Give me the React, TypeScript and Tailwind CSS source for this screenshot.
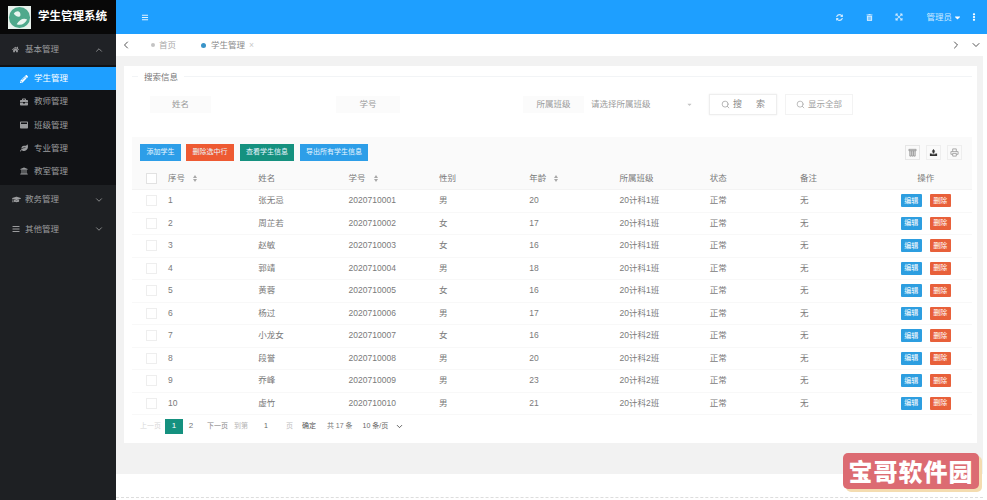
import React from "react";
import { FaHome, FaPencilAlt, FaBriefcase, FaWindowMaximize, FaLeaf, FaUniversity, FaGraduationCap, FaBars, FaSyncAlt, FaTrashAlt, FaExpandArrowsAlt, FaEllipsisV, FaCaretDown } from "react-icons/fa";
import { ChevronUp, ChevronDown, ChevronLeft, ChevronRight, Search } from "lucide-react";

const rows = [
  ["1", "张无忌", "2020710001", "男", "20", "20计科1班"],
  ["2", "周芷若", "2020710002", "女", "17", "20计科1班"],
  ["3", "赵敏", "2020710003", "女", "16", "20计科1班"],
  ["4", "郭靖", "2020710004", "男", "18", "20计科1班"],
  ["5", "黄蓉", "2020710005", "女", "16", "20计科1班"],
  ["6", "杨过", "2020710006", "男", "17", "20计科1班"],
  ["7", "小龙女", "2020710007", "女", "16", "20计科2班"],
  ["8", "段誉", "2020710008", "男", "20", "20计科2班"],
  ["9", "乔峰", "2020710009", "男", "23", "20计科2班"],
  ["10", "虚竹", "2020710010", "男", "21", "20计科2班"],
];

const subs = [
  { label: "学生管理", Icon: FaPencilAlt, active: true },
  { label: "教师管理", Icon: FaBriefcase },
  { label: "班级管理", Icon: FaWindowMaximize },
  { label: "专业管理", Icon: FaLeaf },
  { label: "教室管理", Icon: FaUniversity },
];

function Sort() {
  return (
    <span className="ml-[8px] inline-flex flex-col items-center gap-[1px]">
      <span className="h-0 w-0 border-x-[2.5px] border-b-[3px] border-x-transparent border-b-[#a8a8a8]" />
      <span className="h-0 w-0 border-x-[2.5px] border-t-[3px] border-x-transparent border-t-[#a8a8a8]" />
    </span>
  );
}

function Cols({ cells, action }: { cells: React.ReactNode[]; action: React.ReactNode }) {
  return (
    <>
      {cells.map((c, i) => (
        <div key={i} className="flex w-[90.3px] shrink-0 items-center">{c}</div>
      ))}
      <div className="flex flex-1 items-center justify-center">{action}</div>
    </>
  );
}

export default function App() {
  return (
    <div className="flex h-[500px] w-full overflow-hidden bg-white text-[8.5px] text-[#7a7a7a]" style={{ fontFamily: '"Liberation Sans","Noto Sans CJK SC",sans-serif' }}>
      <aside className="flex w-[116px] shrink-0 flex-col bg-[#1e2023] text-[#9b9c9e]">
        <div className="flex h-[34px] items-center bg-[#080808] pl-[8px]">
          <svg viewBox="0 0 24 24" className="h-[23px] w-[23px] bg-[#e8f1ec]">
            <circle cx="12" cy="12" r="11" fill="#4fa98c" />
            <path d="M6 8c3-4 7-3 7 1 0 3-4 3-7-1zM9 19c3-5 7-7 11-5-2 4-6 7-11 5z" fill="#eaf5f0" />
          </svg>
          <span className="ml-[7px] text-[11.5px] font-bold text-white">学生管理系统</span>
        </div>
        <div className="flex h-[31px] items-center bg-[#202226] pl-[12px] pr-[12px]">
          <FaHome className="h-[7px] w-[7px]" />
          <span className="ml-[6px] flex-1">基本管理</span>
          <ChevronUp className="h-[10px] w-[10px]" />
        </div>
        <div className="flex flex-col bg-[#111215] pb-[2px] pt-[2px]">
          {subs.map(({ label, Icon, active }) => (
            <div key={label} className={`flex h-[23.2px] items-center pl-[20px] ${active ? "bg-[#1e9fff] text-white" : ""}`}>
              <Icon className="h-[8px] w-[8px]" />
              <span className="ml-[6px]">{label}</span>
            </div>
          ))}
        </div>
        <div className="flex h-[29.5px] items-center pl-[12px] pr-[12px]">
          <FaGraduationCap className="h-[9px] w-[9px]" />
          <span className="ml-[4px] flex-1">教务管理</span>
          <ChevronDown className="h-[10px] w-[10px]" />
        </div>
        <div className="flex h-[29.5px] items-center pl-[12px] pr-[12px]">
          <FaBars className="h-[8px] w-[8px]" />
          <span className="ml-[5px] flex-1">其他管理</span>
          <ChevronDown className="h-[10px] w-[10px]" />
        </div>
      </aside>

      <main className="flex min-w-0 flex-1 flex-col">
        <header className="flex h-[34px] shrink-0 items-center bg-[#1e9fff] pl-[25px] text-[#cfeaff]">
          <FaBars className="h-[7px] w-[8px] text-[#e4f4ff]" />
          <div className="ml-auto flex items-center pr-[10px]">
            <FaSyncAlt className="h-[7px] w-[7px]" />
            <FaTrashAlt className="ml-[23px] h-[7px] w-[7px]" />
            <FaExpandArrowsAlt className="ml-[22px] h-[8px] w-[8px]" />
            <span className="ml-[23px]">管理员</span>
            <FaCaretDown className="ml-[1px] h-[9px] w-[9px] text-white" />
            <FaEllipsisV className="ml-[9px] h-[8px] w-[6px] text-white" />
          </div>
        </header>

        <div className="flex h-[22px] shrink-0 items-center bg-white pl-[4px] pr-[5px] text-[#a9a9a9]">
          <ChevronLeft className="h-[12px] w-[12px] text-[#555555]" />
          <span className="ml-[19px] h-[4px] w-[4px] rounded-full bg-[#c4c4c4]" />
          <span className="ml-[4px]">首页</span>
          <span className="ml-[25px] h-[5px] w-[5px] rounded-full bg-[#3a94c8]" />
          <span className="ml-[5px] text-[#8a8a8a]">学生管理</span>
          <span className="ml-[4px] text-[#c8c8c8]">×</span>
          <ChevronRight className="ml-auto h-[12px] w-[12px] text-[#555555]" />
          <ChevronDown className="ml-[8px] h-[12px] w-[12px] text-[#555555]" />
        </div>

        <div className="mr-[4px] flex min-h-0 flex-1 flex-col">
          <div className="flex h-[418px] shrink-0 flex-col bg-[#f2f2f2] pl-[8px] pr-[6px] pt-[10px]">
            <section className="flex h-[377px] w-[853px] flex-col bg-white pl-[8px] pr-[5px]">
              <div className="relative mt-[10px] h-0 border-t border-[#f2f4f6]">
                <span className="absolute left-[6px] top-[-6px] bg-white px-[6px] text-[#777777]">搜索信息</span>
              </div>
              <div className="mt-[17px] flex h-[21px] items-center text-[#9a9a9a]">
                <div className="ml-[18px] flex h-[17px] w-[61px] items-center justify-center bg-[#fbfbfb]">姓名</div>
                <div className="ml-[125px] flex h-[17px] w-[64px] items-center justify-center bg-[#fbfbfb]">学号</div>
                <div className="ml-[123px] flex h-[17px] w-[61px] items-center justify-center bg-[#fbfbfb]">所属班级</div>
                <span className="ml-[7px] w-[95px]">请选择所属班级</span>
                <FaCaretDown className="h-[7px] w-[7px] text-[#c4c4c4]" />
                <button className="ml-[16px] flex h-[21px] w-[68px] items-center justify-center border border-[#eeeeee] text-[9px] text-[#8a8a8a] shadow-[0_0_2px_#eeeeee]">
                  <Search className="h-[9px] w-[9px] text-[#a0a0a0]" />
                  <span className="ml-[3px] w-[32px] [text-align-last:justify]">搜索</span>
                </button>
                <button className="ml-[8px] flex h-[21px] w-[68px] items-center justify-center border border-[#f3f3f3] text-[#a0a0a0]">
                  <Search className="h-[9px] w-[9px] text-[#a8a8a8]" />
                  <span className="ml-[3px]">显示全部</span>
                </button>
              </div>

              <div className="mt-[22px] flex h-[30px] items-center bg-[#fafafa] pl-[8px] pr-[10px] text-[7px] text-[#eaf6ff]">
                <button className="flex h-[17px] w-[41px] items-center justify-center bg-[#2d9ee8]">添加学生</button>
                <button className="ml-[5px] flex h-[17px] w-[48px] items-center justify-center bg-[#ee5a32]">删除选中行</button>
                <button className="ml-[6px] flex h-[17px] w-[54px] items-center justify-center bg-[#15917f]">查看学生信息</button>
                <button className="ml-[6px] flex h-[17px] w-[68px] items-center justify-center bg-[#2d9ee8]">导出所有学生信息</button>
                <div className="ml-auto flex items-center gap-[6px]">
                  <span className="flex h-[15px] w-[15px] items-center justify-center border border-[#e6e6e6]">
                    <svg viewBox="0 0 10 10" className="h-[9px] w-[9px]" fill="none" stroke="#909090" strokeWidth="0.9">
                      <path d="M1 1.5h8v1.5H1zM2 3v6h1.5V3M4.3 3v6h1.5V3M6.5 3v6H8V3" />
                    </svg>
                  </span>
                  <span className="flex h-[15px] w-[15px] items-center justify-center border border-[#eeeeee]">
                    <svg viewBox="0 0 10 10" className="h-[9px] w-[9px]">
                      <path d="M5 1 7 4H6v2H4V4H3zM1 6h2v1h4V6h2v3H1z" fill="#333333" />
                    </svg>
                  </span>
                  <span className="flex h-[15px] w-[15px] items-center justify-center border border-[#eeeeee]">
                    <svg viewBox="0 0 10 10" className="h-[9px] w-[9px]" fill="none" stroke="#999999" strokeWidth="0.9">
                      <path d="M3 4V1h4v3M1 4h8v3H7M3 7H1V4M3 6h4v3H3z" />
                    </svg>
                  </span>
                </div>
              </div>

              <div className="flex h-[23px] items-center border-b border-[#f3f3f3] bg-[#fafafa] pr-[11px]">
                <div className="flex w-[36px] shrink-0 justify-center pl-[2px]"><span className="h-[11px] w-[11px] border border-[#e2e2e2] bg-white" /></div>
                <Cols
                  cells={[
                    <>序号<Sort /></>, "姓名", <>学号<Sort /></>, "性别", <>年龄<Sort /></>, "所属班级", "状态", "备注",
                  ]}
                  action={<span>操作</span>}
                />
              </div>
              {rows.map((r) => (
                <div key={r[0]} className="flex h-[22.5px] items-center border-b border-[#f8f8f8] pr-[11px]">
                  <div className="flex w-[36px] shrink-0 justify-center pl-[2px]"><span className="h-[11px] w-[11px] border border-[#eeeeee]" /></div>
                  <Cols
                    cells={[...r, "正常", "无"]}
                    action={
                      <div className="flex gap-[8px] text-[7px] text-white">
                        <span className="flex h-[13px] w-[21px] items-center justify-center rounded-[1px] bg-[#2d9ee0]">编辑</span>
                        <span className="flex h-[13px] w-[21px] items-center justify-center rounded-[1px] bg-[#e8603a]">删除</span>
                      </div>
                    }
                  />
                </div>
              ))}

              <div className="flex h-[22px] items-center whitespace-nowrap pl-[8px] text-[7px] text-[#999999]">
                <span className="w-[25px] text-[#d8d8d8]">上一页</span>
                <span className="flex h-[15px] w-[18px] items-center justify-center bg-[#15917f] text-[8px] text-white">1</span>
                <span className="ml-[1px] w-[14px] text-center text-[8px] text-[#777777]">2</span>
                <span className="ml-[9px] text-[#888888]">下一页</span>
                <span className="ml-[6px] text-[#b5b5b5]">到第</span>
                <span className="ml-[16px] text-[#666666]">1</span>
                <span className="ml-[18px] text-[#c0c0c0]">页</span>
                <span className="ml-[9px] text-[#555555]">确定</span>
                <span className="ml-[11px] text-[#777777]">共 17 条</span>
                <span className="ml-[10px] text-[#666666]">10 条/页</span>
                <ChevronDown className="ml-[7px] h-[9px] w-[9px] text-[#333333]" />
              </div>
            </section>
          </div>
          <div className="flex-1 border-b border-dashed border-[#dddddd] bg-white" />
          <div className="h-[2px] shrink-0" />
        </div>
      </main>

      <div className="pointer-events-none absolute left-[843px] top-[453px] flex h-[36px] w-[136px] items-center justify-center rounded-[5px] bg-[#dc6b72] text-[24px] font-black tracking-[1px] text-white shadow-[3px_3px_0_#f4dcb0]" style={{ fontFamily: '"Noto Sans CJK SC",sans-serif' }}>
        宝哥软件园
      </div>
    </div>
  );
}
